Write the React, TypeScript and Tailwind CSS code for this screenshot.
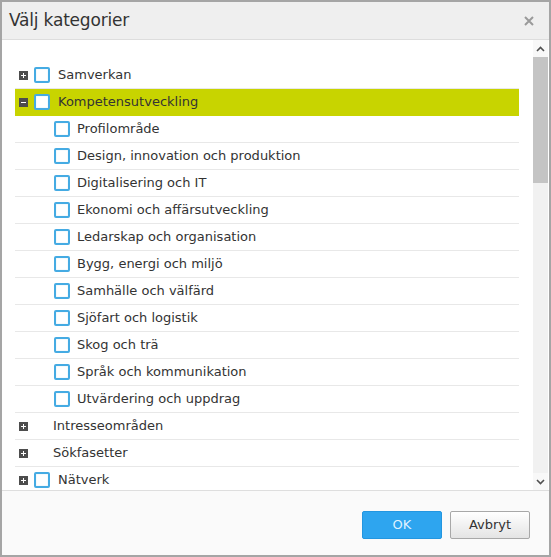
import React from 'react';

type Row = { label: string; level: 0 | 1; expander?: 'plus' | 'minus'; checkbox?: boolean; active?: boolean };

const ROWS: Row[] = [
  { label: 'Samverkan', level: 0, expander: 'plus', checkbox: true },
  { label: 'Kompetensutveckling', level: 0, expander: 'minus', checkbox: true, active: true },
  { label: 'Profilområde', level: 1, checkbox: true },
  { label: 'Design, innovation och produktion', level: 1, checkbox: true },
  { label: 'Digitalisering och IT', level: 1, checkbox: true },
  { label: 'Ekonomi och affärsutveckling', level: 1, checkbox: true },
  { label: 'Ledarskap och organisation', level: 1, checkbox: true },
  { label: 'Bygg, energi och miljö', level: 1, checkbox: true },
  { label: 'Samhälle och välfärd', level: 1, checkbox: true },
  { label: 'Sjöfart och logistik', level: 1, checkbox: true },
  { label: 'Skog och trä', level: 1, checkbox: true },
  { label: 'Språk och kommunikation', level: 1, checkbox: true },
  { label: 'Utvärdering och uppdrag', level: 1, checkbox: true },
  { label: 'Intresseområden', level: 0, expander: 'plus' },
  { label: 'Sökfasetter', level: 0, expander: 'plus' },
  { label: 'Nätverk', level: 0, expander: 'plus', checkbox: true },
];

function Expander({ kind }: { kind: 'plus' | 'minus' }) {
  return (
    <svg width="9" height="9" viewBox="0 0 9 9" className="shrink-0">
      <rect width="9" height="9" fill="#4d4d4d" />
      <rect x="2" y="4" width="5" height="1" fill="#fff" />
      {kind === 'plus' && <rect x="4" y="2" width="1" height="5" fill="#fff" />}
    </svg>
  );
}

function Checkbox() {
  return (
    <span className="block w-[16px] h-[16px] shrink-0 border-2 border-[#45abe3] rounded-[2px] bg-white shadow-[inset_0_0_1px_#9ccbe8]" />
  );
}

function TreeRow({ row }: { row: Row }) {
  const bg = row.active ? 'bg-[#c8d400] border-[#c8d400]' : 'border-[#e8e8e8]';
  if (row.level === 1) {
    return (
      <div className={`h-[27px] flex items-center border-b ${bg} pl-[39px]`}>
        <Checkbox />
        <span className="ml-[7px]">{row.label}</span>
      </div>
    );
  }
  return (
    <div className={`h-[27px] flex items-center border-b ${bg} pl-[4px]`}>
      <Expander kind={row.expander ?? 'plus'} />
      {row.checkbox ? (
        <>
          <span className="ml-[6px]"><Checkbox /></span>
          <span className="ml-[8px]">{row.label}</span>
        </>
      ) : (
        <span className="ml-[25px]">{row.label}</span>
      )}
    </div>
  );
}

function Chevron({ up }: { up?: boolean }) {
  return (
    <svg width="9" height="6" viewBox="0 0 9 6">
      <polyline points={up ? '1,5 4.5,1.5 8,5' : '1,1 4.5,4.5 8,1'} fill="none" stroke="#505050" strokeWidth="1.6" />
    </svg>
  );
}

export default function App() {
  return (
    <div
      className="w-[551px] h-[557px] border-2 border-[#a5a5a5] bg-white flex flex-col text-[#333] overflow-hidden"
      style={{ fontFamily: '"DejaVu Sans", Verdana, sans-serif' }}
    >
      <div className="h-[38px] shrink-0 bg-[#efefef] border-b border-[#dddddd] flex items-center justify-between pl-[7px] pr-[15px]">
        <h1 className="text-[17px] font-normal text-[#333] tracking-[-0.2px] mt-[1px]">Välj kategorier</h1>
        <svg width="10" height="10" viewBox="0 0 10 10">
          <path d="M1 1 L9 9 M9 1 L1 9" stroke="#9a9a9a" strokeWidth="2" />
        </svg>
      </div>

      <div className="flex-1 flex min-h-0">
        <div className="flex-1 overflow-hidden pt-[22px] pl-[13px] pr-[14px] text-[13px]">
          {ROWS.map((r) => (
            <TreeRow key={r.label} row={r} />
          ))}
        </div>
        <div className="w-[15px] shrink-0 flex flex-col bg-[#f1f1f1] mr-[1px]">
          <div className="h-[17px] flex items-center justify-center bg-[#f8f8f8]">
            <Chevron up />
          </div>
          <div className="h-[126px] bg-[#c4c4c4]" />
          <div className="flex-1" />
          <div className="h-[17px] flex items-center justify-center bg-[#f8f8f8]">
            <Chevron />
          </div>
        </div>
      </div>

      <div className="h-[65px] shrink-0 border-t border-[#dedede] bg-[#fafafa] flex justify-end items-start gap-[8px] pt-[20px] pr-[19px] text-[13px]">
        <button className="w-[80px] h-[28px] rounded-[2px] bg-[#2ea5ef] border border-[#2396e0] text-[#dff1ff]">OK</button>
        <button className="w-[80px] h-[28px] rounded-[2px] border border-[#a8a8a8] bg-gradient-to-b from-white to-[#e4e4e4] text-[#333]">
          Avbryt
        </button>
      </div>
    </div>
  );
}
